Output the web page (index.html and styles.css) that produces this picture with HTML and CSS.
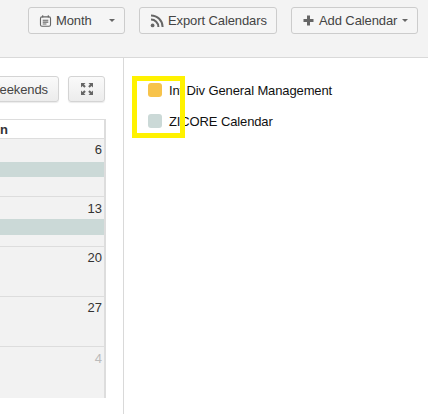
FILE: index.html
```html
<!DOCTYPE html>
<html lang="en">
  <head>
    <meta charset="UTF-8" />
    <meta name="viewport" content="width=device-width, initial-scale=1.0" />
    <title>Calendar</title>
    <link rel="stylesheet" href="styles.css">
  </head>
  <body>
    <header class="topbar">
      <button class="btn btn-month">
        <svg class="icon" width="13" height="14" viewBox="0 0 14 14" fill="none" stroke="#666" stroke-width="1.2">
          <rect x="1.600" y="2.600" width="10.800" height="10" rx="1.600" />
          <path d="M4 .8v2.400M10 .8v2.400M4 6.200h6M4 8.200h6M4 10.200h4" />
        </svg>
        <span>Month</span>
        <i class="caret caret-month"></i>
      </button>
      <button class="btn btn-export">
        <svg class="icon" width="14" height="14" viewBox="0 0 14 14" fill="none" stroke="#666" stroke-width="2">
          <circle cx="2.600" cy="11.400" r="1.900" fill="#666" stroke="none" />
          <path d="M1 5.600a7.400 7.400 0 0 1 7.400 7.400M1 1.400A11.600 11.600 0 0 1 12.600 13" />
        </svg>
        <span>Export Calendars</span>
      </button>
      <button class="btn btn-add">
        <svg class="icon" width="11" height="11" viewBox="0 0 11 11" fill="#666">
          <path d="M4 .5h3V4h3.500v3H7v3.500H4V7H.5V4H4z" />
        </svg>
        <span>Add Calendar</span>
        <i class="caret"></i>
      </button>
    </header>

    <main class="content">
      <section class="cal-col">
        <div class="cal-tools">
          <button class="btn btn-tool btn-weekends">Show Weekends</button>
          <button class="btn btn-tool btn-full" aria-label="Fullscreen">
            <svg width="14" height="14" viewBox="0 0 14 14" fill="#666">
              <path d="M1 1h4.500L4 2.500 5.800 4.300 4.300 5.800 2.500 4 1 5.500zM13 1v4.500L11.500 4 9.700 5.800 8.200 4.300 10 2.500 8.500 1zM1 13V8.500L2.500 10l1.800-1.800 1.500 1.500L4 11.500 5.500 13zM13 13H8.500l1.500-1.500-1.800-1.800 1.500-1.500 1.800 1.800L13 8.500z" />
            </svg>
          </button>
        </div>
        <div class="cal">
          <div class="cal-head"><span>Sun</span></div>
          <div class="cal-row row-first">
            <div class="day">6</div>
            <div class="event"></div>
          </div>
          <div class="cal-row row-second">
            <div class="day day-low">13</div>
            <div class="event"></div>
          </div>
          <div class="cal-row">
            <div class="day">20</div>
          </div>
          <div class="cal-row">
            <div class="day">27</div>
          </div>
          <div class="cal-row">
            <div class="day day-low muted">4</div>
          </div>
        </div>
      </section>

      <aside class="legend">
        <div class="legend-item">
          <span class="swatch swatch-orange"></span>
          <span class="legend-label">Int Div General Management</span>
        </div>
        <div class="legend-item">
          <span class="swatch swatch-grey"></span>
          <span class="legend-label">ZICORE Calendar</span>
        </div>
        <div class="highlight"></div>
      </aside>
    </main>
  </body>
</html>
```

FILE: styles.css
```css
* {
  box-sizing: border-box;
}
html,
body {
  height: 100%;
}
body {
  margin: 0;
  overflow: hidden;
  display: flex;
  flex-direction: column;
  background: #fff;
  color: #333;
  font-family: "Liberation Sans", Arial, sans-serif;
  font-size: 13px;
}

/* top bar */
.topbar {
  height: 58px;
  flex: none;
  display: flex;
  align-items: flex-start;
  padding: 7px 0 0 28px;
  background: #f3f3f3;
  border-bottom: 1px solid #d9d9d9;
}
.btn {
  height: 27px;
  display: flex;
  align-items: center;
  padding: 0;
  background: #f5f5f5;
  border: 1px solid #ccc;
  border-radius: 3px;
  color: #444;
  font: inherit;
  letter-spacing: -0.1px;
  white-space: nowrap;
}
.btn .icon {
  flex: none;
  margin-right: 4px;
}
.btn-month {
  width: 97px;
  padding-left: 10px;
}
.btn-export {
  width: 138px;
  margin-left: 14px;
  padding-left: 10px;
}
.btn-add {
  width: 127px;
  margin-left: 14px;
  padding-left: 11px;
}
.btn-add .icon {
  margin-right: 5px;
}
.caret {
  width: 0;
  height: 0;
  margin-left: 5px;
  border-top: 3px solid #666;
  border-left: 3px solid transparent;
  border-right: 3px solid transparent;
}
.caret-month {
  margin-left: 17px;
}

/* calendar column */
.content {
  flex: 1;
  display: flex;
  min-height: 0;
}
.cal-col {
  width: 124px;
  flex: none;
  padding-right: 17px;
  border-right: 1px solid #d9d9d9;
  overflow: hidden;
}
.cal-tools {
  display: flex;
  justify-content: flex-end;
  gap: 9px;
  height: 61px;
  padding: 18px 1px 0 0;
}
.btn-tool {
  flex: none;
  height: 26px;
  justify-content: center;
  background: linear-gradient(#fafafa, #ececec);
  border-color: #d4d4d4;
  box-shadow: 0 1px 1px rgba(0, 0, 0, 0.08);
}
.btn-weekends {
  width: 104px;
  justify-content: flex-end;
  padding-right: 10px;
}
.btn-full {
  width: 37px;
}

.cal {
  border-top: 1px solid #ddd;
  border-right: 2px solid #ddd;
}
.cal-head {
  height: 19px;
  display: flex;
  justify-content: flex-end;
  padding-right: 96px;
  line-height: 19px;
  font-weight: bold;
  border-bottom: 1px solid #ddd;
}
.cal-row {
  height: 50px;
  background: #f2f2f2;
  border-bottom: 1px solid #ddd;
}
.row-first {
  height: 58px;
}
.cal-row:last-child {
  height: 51px;
  border-bottom: 0;
}
.day {
  height: 24px;
  padding: 2px 2px 0 0;
  text-align: right;
  line-height: 18px;
}
.day-low {
  padding-top: 3px;
}
.muted {
  color: #bbb;
}
.event {
  height: 15px;
  background: #cbd9d7;
}
.row-first .day {
  height: 23px;
}
.row-second .day {
  height: 22px;
}
.row-second .event {
  height: 16px;
}

/* legend */
.legend {
  position: relative;
  flex: 1;
  padding: 16px 0 0 24px;
  color: #111;
}
.legend-item {
  display: flex;
  align-items: center;
  height: 31px;
}
.legend-label {
  padding-top: 1px;
  letter-spacing: -0.12px;
}
.swatch {
  width: 14px;
  height: 14px;
  margin-right: 7px;
  border-radius: 3px;
}
.swatch-orange {
  background: #f7c34b;
}
.swatch-grey {
  background: #cbd9d7;
}
.highlight {
  position: absolute;
  left: 8px;
  top: 18px;
  width: 53px;
  height: 62px;
  border: 5px solid #fff200;
}
```
